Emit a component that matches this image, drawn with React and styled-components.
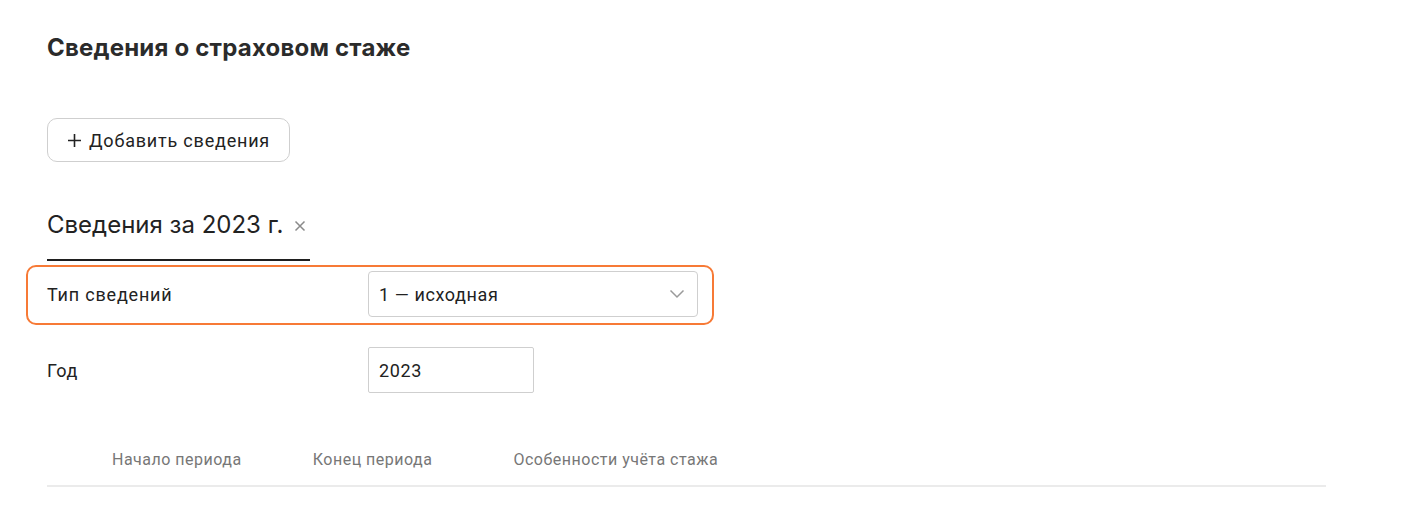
import styled, { createGlobalStyle } from "styled-components";

const GlobalStyle = createGlobalStyle`
  body {
    margin: 0;
    background: #fff;
    font-family: Roboto, "Liberation Sans", sans-serif;
    color: #222;
  }
`;

const columns = ["Начало периода", "Конец периода", "Особенности учёта стажа"];

export default function App() {
  return (
    <Page>
      <GlobalStyle />
      <Title>Сведения о страховом стаже</Title>

      <AddButton type="button">
        <PlusIcon />
        Добавить сведения
      </AddButton>

      <Tabs>
        <Tab>
          Сведения за 2023 г.
          <CloseIcon />
        </Tab>
      </Tabs>

      {/* строка выделена оранжевой рамкой */}
      <FormRow highlighted>
        <Label>Тип сведений</Label>
        <Select>
          1 — исходная
          <ChevronIcon />
        </Select>
      </FormRow>

      <FormRow>
        <Label>Год</Label>
        <YearInput>2023</YearInput>
      </FormRow>

      <TableHead>
        {columns.map((c, i) => (
          <HeadCell key={c} index={i}>
            {c}
          </HeadCell>
        ))}
      </TableHead>
    </Page>
  );
}

function PlusIcon() {
  return (
    <svg width="15" height="15" viewBox="0 0 15 15">
      <path d="M7.5 1v13M1 7.5h13" stroke="#222" strokeWidth="1.6" />
    </svg>
  );
}

function CloseIcon() {
  return (
    <svg width="12" height="12" viewBox="0 0 12 12">
      <path d="M1.5 1.5l9 9M10.5 1.5l-9 9" stroke="#8a8a8a" strokeWidth="1.5" />
    </svg>
  );
}

function ChevronIcon() {
  return (
    <ChevronBox>
      <svg width="16" height="10" viewBox="0 0 16 10">
        <path d="M1.5 1.5l6.5 6.5 6.5-6.5" fill="none" stroke="#9a9a9a" strokeWidth="1.5" />
      </svg>
    </ChevronBox>
  );
}

const Page = styled.div`
  padding: 32px 92px 0 47px;
  display: flex;
  flex-direction: column;
  align-items: flex-start;
`;

const Title = styled.h1`
  margin: 0;
  font-family: Inter, "Liberation Sans", sans-serif;
  font-size: 24px;
  line-height: 32px;
  font-weight: 700;
  color: #2b2b2b;
  letter-spacing: 0.2px;
`;

const AddButton = styled.button`
  margin-top: 54px;
  height: 44px;
  width: 243px;
  padding: 0 0 0 19px;
  display: flex;
  align-items: center;
  gap: 7px;
  background: #fff;
  border: 1px solid #cfcfcf;
  border-radius: 10px;
  font-family: Roboto, "Liberation Sans", sans-serif;
  font-size: 18px;
  letter-spacing: 0.8px;
  color: #222;
`;

const Tabs = styled.div`
  margin-top: 42px;
  display: flex;
`;

const Tab = styled.div`
  display: flex;
  align-items: center;
  gap: 10px;
  padding-right: 4px;
  padding-bottom: 14px;
  height: 57px;
  box-sizing: border-box;
  font-family: Inter, "Liberation Sans", sans-serif;
  font-size: 24px;
  font-weight: 400;
  color: #222;
  border-bottom: 2px solid #1f1f1f;
  svg {
    margin-top: 3px;
  }
`;

const FormRow = styled.div`
  display: grid;
  grid-template-columns: 321px 330px;
  align-items: center;
  box-sizing: border-box;
  margin-top: ${({ highlighted }) => (highlighted ? "4px" : "22px")};
  margin-left: ${({ highlighted }) => (highlighted ? "-21px" : "0")};
  padding: ${({ highlighted }) => (highlighted ? "4px 14px 6px 19px" : "0")};
  border: ${({ highlighted }) => (highlighted ? "2px solid #f77a36" : "none")};
  border-radius: 10px;
`;

const Label = styled.div`
  font-size: 18px;
  letter-spacing: 0.8px;
  color: #222;
`;

const Select = styled.div`
  height: 46px;
  box-sizing: border-box;
  padding: 0 12px 0 10px;
  display: flex;
  align-items: center;
  justify-content: space-between;
  border: 1px solid #cfcfcf;
  border-radius: 4px;
  font-size: 18px;
  letter-spacing: 0.6px;
  color: #222;
`;

const ChevronBox = styled.span`
  display: flex;
  align-items: center;
`;

const YearInput = styled.div`
  width: 166px;
  height: 46px;
  box-sizing: border-box;
  padding: 0 10px;
  display: flex;
  align-items: center;
  border: 1px solid #cfcfcf;
  border-radius: 2px;
  font-size: 18px;
  letter-spacing: 0.6px;
  color: #222;
`;

const TableHead = styled.div`
  margin-top: 57px;
  align-self: stretch;
  display: flex;
  padding: 0 0 15px 65px;
  border-bottom: 2px solid #ebebeb;
`;

const HeadCell = styled.div`
  font-size: 16px;
  line-height: 20px;
  letter-spacing: 0.5px;
  color: #777;
  margin-left: ${({ index }) => ["0", "71px", "81px"][index]};
`;
